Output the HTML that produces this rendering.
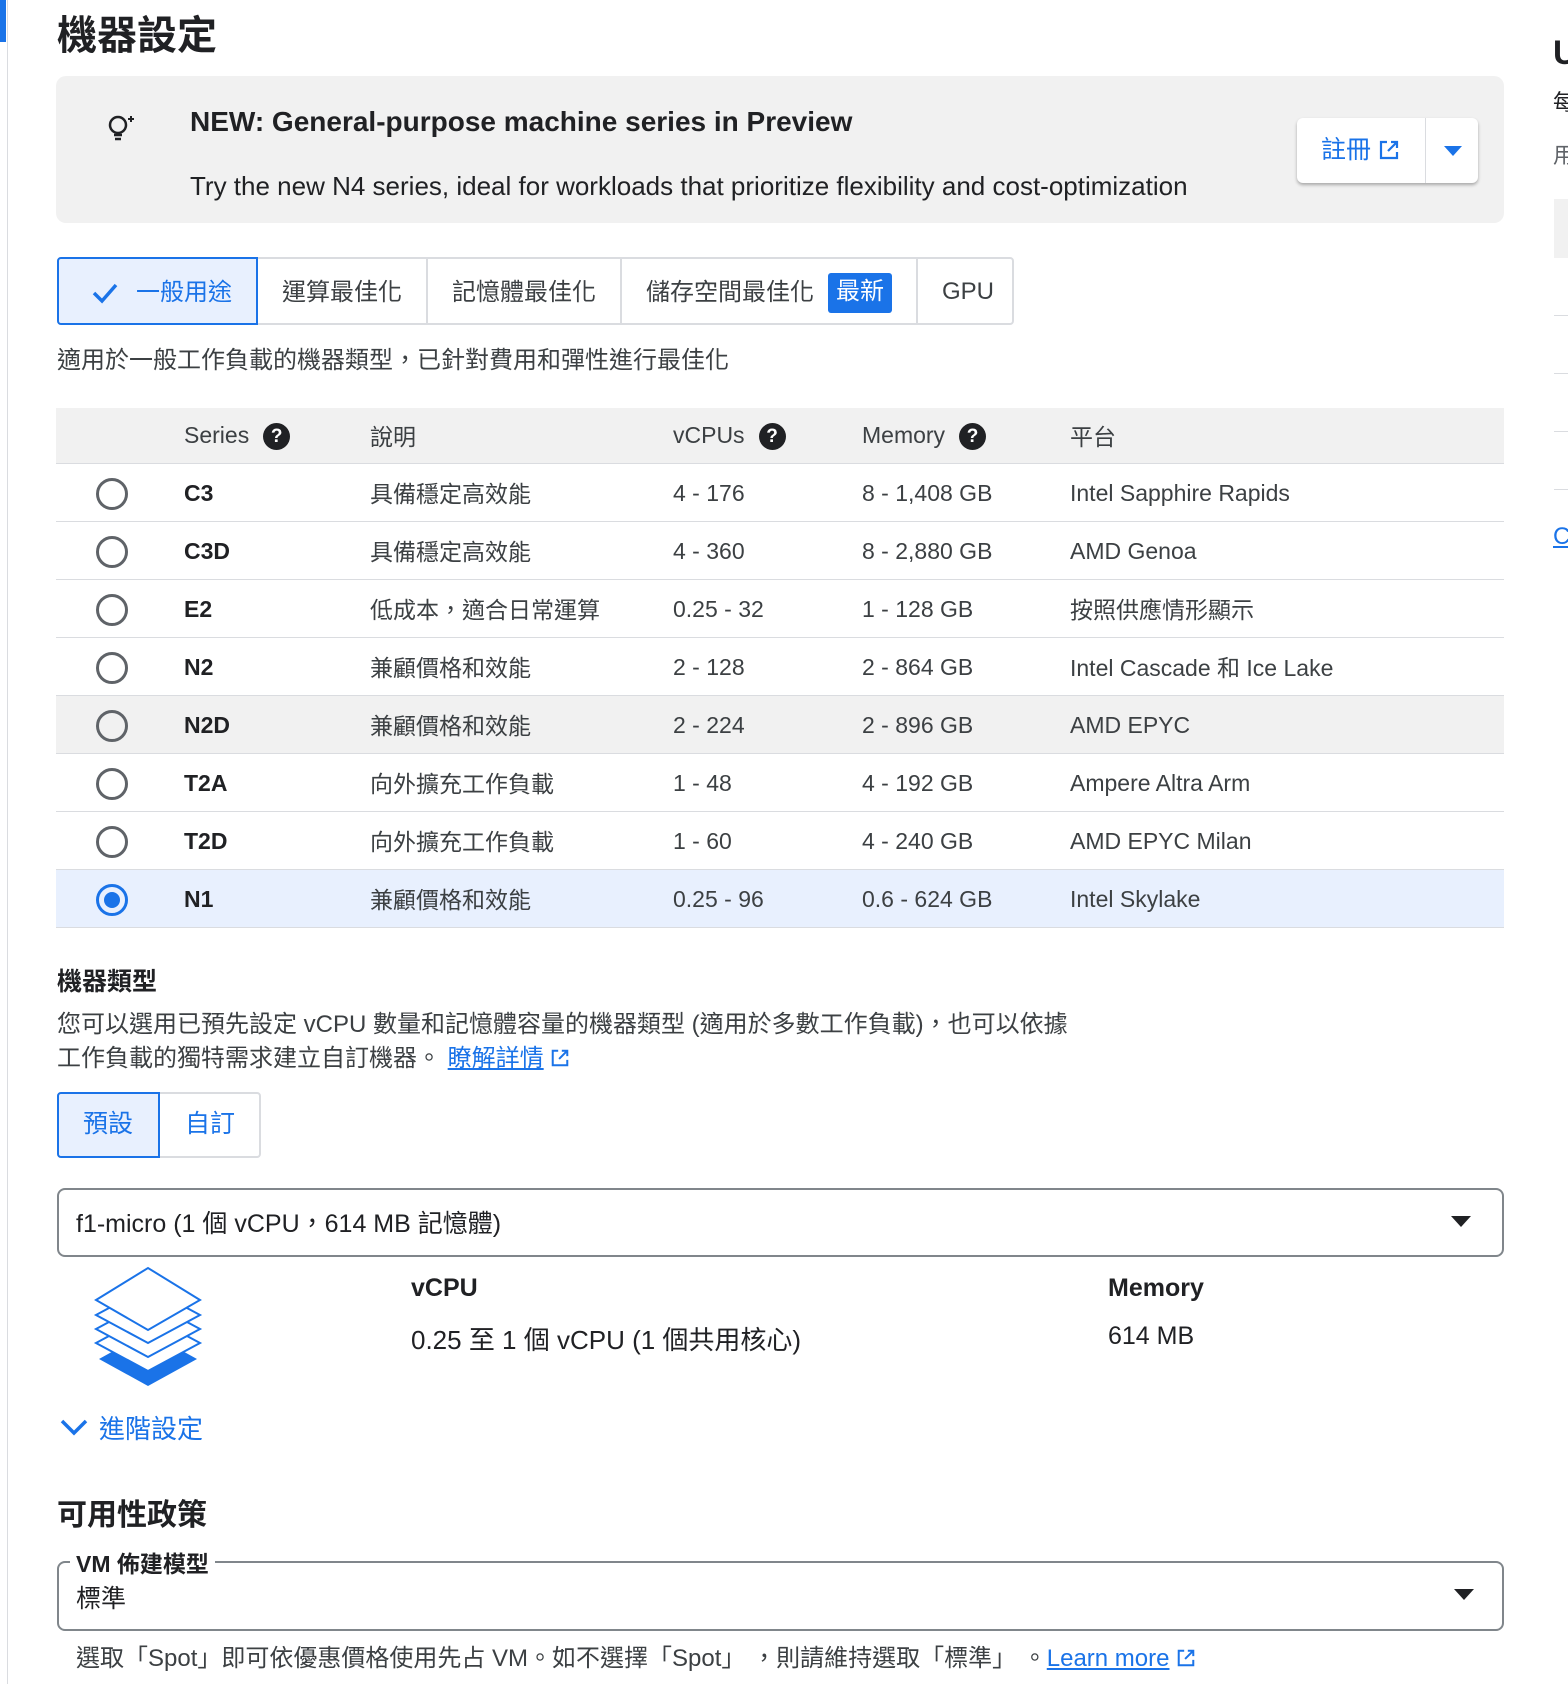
<!DOCTYPE html>
<html><head><meta charset="utf-8">
<style>
*{box-sizing:border-box;margin:0;padding:0}
body{width:1568px;height:1684px;overflow:hidden;background:#fff;font-family:"Liberation Sans","Noto Sans CJK TC",sans-serif;color:#202124;position:relative}
.a{position:absolute;white-space:nowrap}
.g{color:#3c4043}
.row{position:absolute;left:56px;width:1448px;height:58px;border-bottom:1px solid #dadce0;font-size:23px;color:#3c4043}
.row span{position:absolute;top:16px}
.row span.c{top:11px}
.radio{position:absolute;left:96px;top:14px;width:32px;height:32px;border:3px solid #5f6368;border-radius:50%}
.q{display:inline-block;width:27px;height:27px;border-radius:50%;background:#202124;color:#fff;font-size:19px;font-weight:bold;text-align:center;line-height:27px;vertical-align:middle;margin-left:14px}
</style></head><body>
<div class="a" style="left:0;top:0;width:6px;height:42px;background:#1a73e8"></div>
<div class="a" style="left:7px;top:0;width:1px;height:1684px;background:#dadce0"></div>
<div class="a" style="left:57px;top:3px;font-size:40px;font-weight:bold">機器設定</div>

<div class="a" style="left:56px;top:76px;width:1448px;height:147px;background:#f1f1f1;border-radius:10px"></div>
<svg class="a" style="left:104px;top:110px" width="38" height="38" viewBox="0 0 38 38"><circle cx="14" cy="15" r="8" fill="none" stroke="#202124" stroke-width="2.5"/><path d="M10 25h8M11 29h6" stroke="#202124" stroke-width="2.5"/><path d="M27 6v6M24 9h6" stroke="#202124" stroke-width="2"/></svg>
<div class="a" style="left:190px;top:106px;font-size:28px;font-weight:bold">NEW: General-purpose machine series in Preview</div>
<div class="a" style="left:190px;top:171px;font-size:26px">Try the new N4 series, ideal for workloads that prioritize flexibility and cost-optimization</div>
<div class="a" style="left:1297px;top:118px;width:181px;height:65px;background:#fff;border-radius:6px;box-shadow:0 2px 3px rgba(0,0,0,.3)"></div>
<div class="a" style="left:1425px;top:118px;width:1px;height:65px;background:#dadce0"></div>
<div class="a" style="left:1321px;top:130px;font-size:25px;color:#1a73e8">註冊</div>
<svg class="a" style="left:1378px;top:139px" width="22" height="22" viewBox="0 0 22 22"><path d="M9 3H3v16h16v-6M13 3h6v6M19 3l-9 9" fill="none" stroke="#1a73e8" stroke-width="2.2"/></svg>
<svg class="a" style="left:1444px;top:146px" width="18" height="10"><path d="M0 0h18L9 10z" fill="#1a73e8"/></svg>

<div class="a" style="left:57px;top:257px;width:957px;height:68px;border:2px solid #dadce0;border-radius:4px"></div>
<div class="a" style="left:57px;top:257px;width:201px;height:68px;border:2px solid #1a73e8;background:#e8f0fe;border-radius:4px 0 0 4px"></div>
<div class="a" style="left:426px;top:257px;width:2px;height:68px;background:#dadce0"></div>
<div class="a" style="left:620px;top:257px;width:2px;height:68px;background:#dadce0"></div>
<div class="a" style="left:916px;top:257px;width:2px;height:68px;background:#dadce0"></div>
<svg class="a" style="left:92px;top:282px" width="26" height="22"><path d="M2 11l8 8L24 3" fill="none" stroke="#1a73e8" stroke-width="3.5"/></svg>
<div class="a" style="left:136px;top:272px;font-size:24px;color:#1a73e8">一般用途</div>
<div class="a g" style="left:282px;top:272px;font-size:24px">運算最佳化</div>
<div class="a g" style="left:452px;top:272px;font-size:24px">記憶體最佳化</div>
<div class="a g" style="left:646px;top:272px;font-size:24px">儲存空間最佳化</div>
<div class="a" style="left:828px;top:273px;width:64px;height:40px;background:#1a73e8;color:#fff;font-size:24px;border-radius:3px;text-align:center;line-height:38px">最新</div>
<div class="a g" style="left:942px;top:278px;font-size:24px">GPU</div>
<div class="a g" style="left:57px;top:340px;font-size:24px">適用於一般工作負載的機器類型，已針對費用和彈性進行最佳化</div>

<div class="a" style="left:56px;top:408px;width:1448px;height:56px;background:#f1f1f1;border-bottom:1px solid #dadce0;font-size:23px;color:#3c4043">
<span class="a" style="left:128px;top:14px">Series<span class="q">?</span></span>
<span class="a" style="left:314px;top:10px">說明</span>
<span class="a" style="left:617px;top:14px">vCPUs<span class="q">?</span></span>
<span class="a" style="left:806px;top:14px">Memory<span class="q">?</span></span>
<span class="a" style="left:1014px;top:10px">平台</span>
</div>

<div class="row" style="top:464px"><div class="radio" style="left:40px"></div><span style="left:128px;font-weight:bold;color:#202124">C3</span><span class="c" style="left:314px">具備穩定高效能</span><span style="left:617px">4 - 176</span><span style="left:806px">8 - 1,408 GB</span><span style="left:1014px">Intel Sapphire Rapids</span></div>
<div class="row" style="top:522px"><div class="radio" style="left:40px"></div><span style="left:128px;font-weight:bold;color:#202124">C3D</span><span class="c" style="left:314px">具備穩定高效能</span><span style="left:617px">4 - 360</span><span style="left:806px">8 - 2,880 GB</span><span style="left:1014px">AMD Genoa</span></div>
<div class="row" style="top:580px"><div class="radio" style="left:40px"></div><span style="left:128px;font-weight:bold;color:#202124">E2</span><span class="c" style="left:314px">低成本，適合日常運算</span><span style="left:617px">0.25 - 32</span><span style="left:806px">1 - 128 GB</span><span class="c" style="left:1014px">按照供應情形顯示</span></div>
<div class="row" style="top:638px"><div class="radio" style="left:40px"></div><span style="left:128px;font-weight:bold;color:#202124">N2</span><span class="c" style="left:314px">兼顧價格和效能</span><span style="left:617px">2 - 128</span><span style="left:806px">2 - 864 GB</span><span class="c" style="left:1014px">Intel Cascade 和 Ice Lake</span></div>
<div class="row" style="top:696px;background:#f1f1f1"><div class="radio" style="left:40px"></div><span style="left:128px;font-weight:bold;color:#202124">N2D</span><span class="c" style="left:314px">兼顧價格和效能</span><span style="left:617px">2 - 224</span><span style="left:806px">2 - 896 GB</span><span style="left:1014px">AMD EPYC</span></div>
<div class="row" style="top:754px"><div class="radio" style="left:40px"></div><span style="left:128px;font-weight:bold;color:#202124">T2A</span><span class="c" style="left:314px">向外擴充工作負載</span><span style="left:617px">1 - 48</span><span style="left:806px">4 - 192 GB</span><span style="left:1014px">Ampere Altra Arm</span></div>
<div class="row" style="top:812px"><div class="radio" style="left:40px"></div><span style="left:128px;font-weight:bold;color:#202124">T2D</span><span class="c" style="left:314px">向外擴充工作負載</span><span style="left:617px">1 - 60</span><span style="left:806px">4 - 240 GB</span><span style="left:1014px">AMD EPYC Milan</span></div>
<div class="row" style="top:870px;background:#e8f0fe"><div class="radio" style="left:40px;border-color:#1a73e8"><div style="position:absolute;left:5px;top:5px;width:16px;height:16px;border-radius:50%;background:#1a73e8"></div></div><span style="left:128px;font-weight:bold;color:#202124">N1</span><span class="c" style="left:314px">兼顧價格和效能</span><span style="left:617px">0.25 - 96</span><span style="left:806px">0.6 - 624 GB</span><span style="left:1014px">Intel Skylake</span></div>

<div class="a" style="left:57px;top:962px;font-size:25px;font-weight:bold">機器類型</div>
<div class="a g" style="left:57px;top:1008px;font-size:24px;line-height:34px">您可以選用已預先設定 vCPU 數量和記憶體容量的機器類型 (適用於多數工作負載)，也可以依據<br>工作負載的獨特需求建立自訂機器。 <span style="color:#1a73e8;text-decoration:underline">瞭解詳情</span> <svg width="20" height="20" viewBox="0 0 22 22" style="vertical-align:-2px"><path d="M9 3H3v16h16v-6M13 3h6v6M19 3l-9 9" fill="none" stroke="#1a73e8" stroke-width="2.2"/></svg></div>

<div class="a" style="left:57px;top:1092px;width:204px;height:66px;border:2px solid #dadce0;border-radius:4px"></div>
<div class="a" style="left:57px;top:1092px;width:103px;height:66px;border:2px solid #1a73e8;background:#e8f0fe;border-radius:4px 0 0 4px"></div>
<div class="a" style="left:83px;top:1104px;font-size:25px;color:#1a73e8">預設</div>
<div class="a" style="left:185px;top:1104px;font-size:25px;color:#1a73e8">自訂</div>

<div class="a" style="left:57px;top:1188px;width:1447px;height:69px;border:2px solid #80868b;border-radius:8px"></div>
<div class="a" style="left:76px;top:1204px;font-size:25px">f1-micro (1 個 vCPU，614 MB 記憶體)</div>
<svg class="a" style="left:1451px;top:1216px" width="20" height="11"><path d="M0 0h20L10 11z" fill="#202124"/></svg>

<svg class="a" style="left:91px;top:1265px" width="114" height="122" viewBox="0 0 114 122">
<path d="M8 94L57 67l49 27-49 27z" fill="#1a73e8"/>
<g fill="#fff" stroke="#1a73e8" stroke-width="2"><path d="M5 78L57 50l52 28-52 28z"/><path d="M5 64L57 36l52 28-52 28z"/><path d="M5 50L57 22l52 28-52 28z"/><path d="M5 35L57 3l52 32-52 30z"/></g></svg>
<div class="a" style="left:411px;top:1274px;font-size:25px;font-weight:bold">vCPU</div>
<div class="a" style="left:411px;top:1320px;font-size:26px">0.25 至 1 個 vCPU (1 個共用核心)</div>
<div class="a" style="left:1108px;top:1274px;font-size:25px;font-weight:bold">Memory</div>
<div class="a" style="left:1108px;top:1322px;font-size:25px">614 MB</div>
<svg class="a" style="left:60px;top:1418px" width="28" height="18"><path d="M2 3l12 12L26 3" fill="none" stroke="#1a73e8" stroke-width="3.5"/></svg>
<div class="a" style="left:99px;top:1409px;font-size:26px;color:#1a73e8">進階設定</div>

<div class="a" style="left:57px;top:1490px;font-size:30px;font-weight:bold">可用性政策</div>
<div class="a" style="left:57px;top:1561px;width:1447px;height:70px;border:2px solid #80868b;border-radius:8px"></div>
<div class="a" style="left:70px;top:1545px;background:#fff;padding:0 6px;font-size:23px;font-weight:bold">VM 佈建模型</div>
<div class="a" style="left:76px;top:1579px;font-size:25px">標準</div>
<svg class="a" style="left:1454px;top:1589px" width="20" height="11"><path d="M0 0h20L10 11z" fill="#202124"/></svg>
<div class="a g" style="left:76px;top:1638px;font-size:24px">選取「Spot」即可依優惠價格使用先占 VM。如不選擇「Spot」&nbsp;，則請維持選取「標準」&nbsp;。<span style="color:#1a73e8;text-decoration:underline">Learn more</span> <svg width="20" height="20" viewBox="0 0 22 22" style="vertical-align:-2px"><path d="M9 3H3v16h16v-6M13 3h6v6M19 3l-9 9" fill="none" stroke="#1a73e8" stroke-width="2.2"/></svg></div>

<div class="a" style="left:1554px;top:199px;width:14px;height:59px;background:#f1f1f1"></div>
<div class="a" style="left:1554px;top:315px;width:14px;height:1px;background:#dadce0"></div>
<div class="a" style="left:1554px;top:373px;width:14px;height:1px;background:#dadce0"></div>
<div class="a" style="left:1554px;top:431px;width:14px;height:1px;background:#dadce0"></div>
<div class="a" style="left:1554px;top:489px;width:14px;height:1px;background:#dadce0"></div>
<div class="a" style="left:1553px;top:34px;font-size:34px;font-weight:bold">U</div>
<div class="a" style="left:1553px;top:85px;font-size:22px">每</div>
<div class="a" style="left:1553px;top:138px;font-size:22px;color:#5f6368">用</div>
<div class="a" style="left:1553px;top:523px;font-size:24px;color:#1a73e8;text-decoration:underline">C</div>
</body></html>
